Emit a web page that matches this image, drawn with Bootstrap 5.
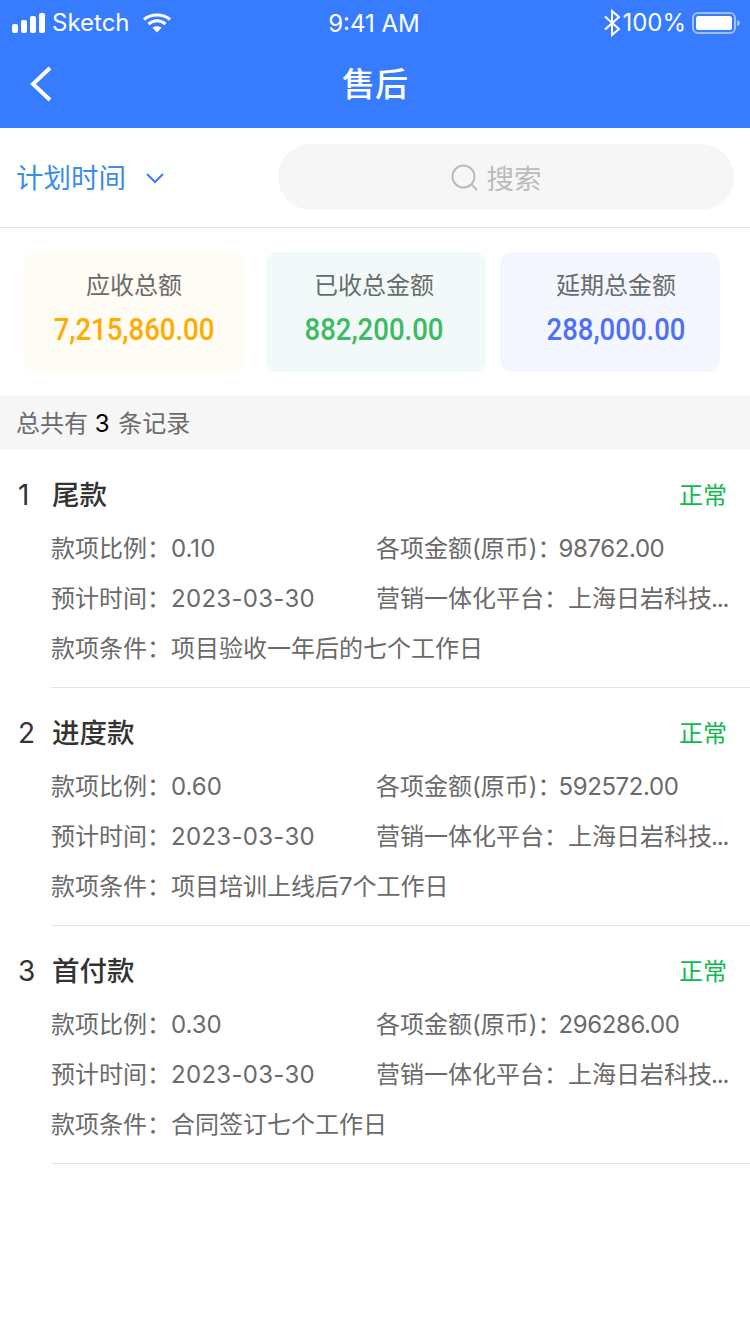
<!DOCTYPE html>
<html lang="zh">
<head>
    <meta charset="UTF-8">
    <meta name="viewport" content="width=device-width, initial-scale=1.0">
    <title>售后</title>
    <link href="https://cdn.jsdelivr.net/npm/bootstrap@5.3.0/dist/css/bootstrap.min.css" rel="stylesheet">
    <style>
        body {
            font-family: Inter, "Noto Sans CJK SC", sans-serif;
            background: #fff;
            color: #6a6a6a;
            font-size: 24px;
        }
        .top-area { background: #377bff; color: #fff; height: 128px; }
        .status-bar { height: 40px; padding: 6px 10px 0 12px; font-size: 24px; line-height: 34px; }
        .status-side { flex: 1 1 0; }
        .signal-text { margin-left: 7px; margin-right: 13px; }
        .clock-text { margin-right: 4px; padding-top: 2px; }
        .bt-gap { margin-left: 1px; }
        .batt-gap { margin-left: 6px; }
        .title-bar { height: 88px; padding: 0 30px; }
        .title-text { font-size: 33px; font-weight: 500; line-height: 88px; }
        .filter-row { height: 100px; border-bottom: 1px solid #e5e5e5; padding: 16px 16px 0 16px; }
        .filter-label { color: #3a8ee6; font-size: 27.5px; width: 262px; height: 66px; padding-top: 3px; }
        .filter-caret { margin-left: 19px; }
        .search-pill { background: #f6f6f6; border-radius: 33px; height: 66px; width: 456px; color: #bbb; font-size: 27.5px; padding: 5px 20px 0 0; }
        .search-icon { margin-right: 9px; margin-top: -5px; }
        .stats-row { padding: 24px 0 24px 24px; }
        .stat-box { width: 220px; height: 120px; border-radius: 12px; padding-top: 15px; font-size: 24px; line-height: 38px; }
        .stat-num { font-family: Roboto, sans-serif; font-size: 32px; font-weight: 500; line-height: 49px; display: block; transform: scaleX(.86); }
        .stat-gap-a { margin-right: 22px; }
        .stat-gap-b { margin-right: 14px; padding-right: 4px; }
        .tone-orange { background: #fffbf5; }
        .tone-orange .stat-num { color: #ffab00; }
        .tone-green { background: #f1faf8; }
        .tone-green .stat-num { color: #3dba65; }
        .tone-blue { background: #f4f7ff; padding-left: 12px; }
        .tone-blue .stat-num { color: #4f6ff5; }
        .sum-band { background: #f6f6f6; height: 54px; line-height: 54px; padding: 1px 0 0 16px; }
        .sum-band b { color: #000; font-weight: 400; margin-right: 2px; }
        .pay-item { height: 238px; padding-left: 18px; }
        .pay-head { height: 74px; padding-top: 23px; line-height: 44px; padding-right: 23px; }
        .pay-idx { width: 34px; color: #333; font-size: 28px; }
        .pay-name { color: #333; font-size: 27.5px; font-weight: 500; }
        .pay-state { color: #0dba4f; margin-left: auto; padding-top: 1px; }
        .pay-body { margin-left: 33px; border-bottom: 1px solid #e5e5e5; height: 164px; }
        .pay-line { height: 50px; line-height: 50px; white-space: nowrap; }
        .pay-col { width: 325px; }
        .pay-date { letter-spacing: .3px; }
        .pay-amount { margin-left: -3px; letter-spacing: -.4px; }
        .pay-dots { letter-spacing: -1.2px; margin-left: -1px; }
    </style>
</head>
<body>
    <div class="top-area">
        <div class="status-bar d-flex align-items-center">
            <div class="status-side d-flex align-items-center">
                <svg width="33" height="20" viewBox="0 0 33 20" fill="#fff">
                    <rect x="0" y="11" width="6" height="9" rx="2"/>
                    <rect x="9" y="7" width="6" height="13" rx="2"/>
                    <rect x="18" y="3" width="6" height="17" rx="2"/>
                    <rect x="27" y="0" width="6" height="20" rx="2"/>
                </svg>
                <span class="signal-text">Sketch</span>
                <svg width="28" height="20" viewBox="0 0 28 20" fill="none" stroke="#fff" stroke-width="3">
                    <path d="M1 6.500C8 .5 20 .5 27 6.500"/>
                    <path d="M5.500 11C10.500 6.800 17.500 6.800 22.500 11"/>
                    <path d="M14 19.500L9.500 14.800C12 12.800 16 12.800 18.500 14.800Z" fill="#fff" stroke="none"/>
                </svg>
            </div>
            <div class="clock-text">9:41 AM</div>
            <div class="status-side d-flex align-items-center justify-content-end">
                <svg width="17" height="28" viewBox="0 0 17 28" fill="none" stroke="#fff" stroke-width="2">
                    <path d="M1 7.500L15 20L8 26V2L15 8L1 20.500"/>
                </svg>
                <span class="bt-gap">100%</span>
                <svg class="batt-gap" width="48" height="22" viewBox="0 0 48 22">
                    <rect x="1" y="1" width="42" height="20" rx="5" fill="none" stroke="#9dbfff" stroke-width="2"/>
                    <rect x="4" y="4" width="36" height="14" rx="2.500" fill="#fff"/>
                    <path d="M45 8C47 8.500 48 9.500 48 11S47 13.500 45 14Z" fill="#9dbfff"/>
                </svg>
            </div>
        </div>
        <div class="title-bar d-flex align-items-center">
            <div class="status-side">
                <svg class="d-block" width="22" height="36" viewBox="0 0 22 36" fill="none" stroke="#fff" stroke-width="4">
                    <path d="M20 2L3 18L20 34"/>
                </svg>
            </div>
            <div class="title-text">售后</div>
            <div class="status-side"></div>
        </div>
    </div>

    <div class="filter-row d-flex">
        <div class="filter-label d-flex align-items-center">
            计划时间
            <svg class="filter-caret" width="20" height="14" viewBox="0 0 20 14" fill="none" stroke="#377bff" stroke-width="2">
                <path d="M2 2L10 10L18 2"/>
            </svg>
        </div>
        <div class="search-pill d-flex align-items-center justify-content-center">
            <svg class="search-icon" width="27" height="27" viewBox="0 0 27 27" fill="none" stroke="#bbb" stroke-width="2">
                <circle cx="12.500" cy="12.500" r="11"/>
                <path d="M20.500 20.500L26 26"/>
            </svg>
            搜索
        </div>
    </div>

    <div class="stats-row d-flex text-center">
        <div class="stat-box stat-gap-a tone-orange">应收总额<span class="stat-num">7,215,860.00</span></div>
        <div class="stat-box stat-gap-b tone-green">已收总金额<span class="stat-num">882,200.00</span></div>
        <div class="stat-box tone-blue">延期总金额<span class="stat-num">288,000.00</span></div>
    </div>

    <div class="sum-band">总共有 <b>3</b> 条记录</div>

    <div class="pay-item">
        <div class="pay-head d-flex">
            <div class="pay-idx">1</div>
            <div class="pay-name">尾款</div>
            <div class="pay-state">正常</div>
        </div>
        <div class="pay-body">
            <div class="pay-line d-flex"><div class="pay-col">款项比例：0.10</div><div>各项金额(原币)：<span class="pay-amount">98762.00</span></div></div>
            <div class="pay-line d-flex"><div class="pay-col">预计时间：<span class="pay-date">2023-03-30</span></div><div>营销一体化平台：上海日岩科技<span class="pay-dots">...</span></div></div>
            <div class="pay-line">款项条件：项目验收一年后的七个工作日</div>
        </div>
    </div>
    <div class="pay-item">
        <div class="pay-head d-flex">
            <div class="pay-idx">2</div>
            <div class="pay-name">进度款</div>
            <div class="pay-state">正常</div>
        </div>
        <div class="pay-body">
            <div class="pay-line d-flex"><div class="pay-col">款项比例：0.60</div><div>各项金额(原币)：<span class="pay-amount">592572.00</span></div></div>
            <div class="pay-line d-flex"><div class="pay-col">预计时间：<span class="pay-date">2023-03-30</span></div><div>营销一体化平台：上海日岩科技<span class="pay-dots">...</span></div></div>
            <div class="pay-line">款项条件：项目培训上线后7个工作日</div>
        </div>
    </div>
    <div class="pay-item">
        <div class="pay-head d-flex">
            <div class="pay-idx">3</div>
            <div class="pay-name">首付款</div>
            <div class="pay-state">正常</div>
        </div>
        <div class="pay-body">
            <div class="pay-line d-flex"><div class="pay-col">款项比例：0.30</div><div>各项金额(原币)：<span class="pay-amount">296286.00</span></div></div>
            <div class="pay-line d-flex"><div class="pay-col">预计时间：<span class="pay-date">2023-03-30</span></div><div>营销一体化平台：上海日岩科技<span class="pay-dots">...</span></div></div>
            <div class="pay-line">款项条件：合同签订七个工作日</div>
        </div>
    </div>

    <script src="https://cdn.jsdelivr.net/npm/bootstrap@5.3.0/dist/js/bootstrap.bundle.min.js"></script>
</body>
</html>
